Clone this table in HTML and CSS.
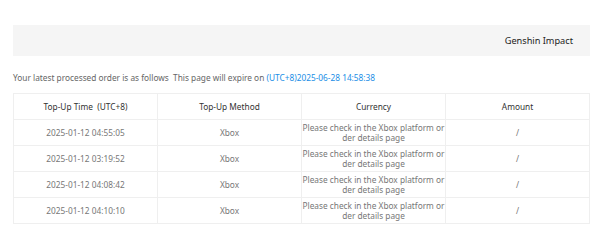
FILE: index.html
```html
<!DOCTYPE html>
<html lang="en">
<head>
<meta charset="utf-8">
<link rel="stylesheet" href="styles.css">
</head>
<body>
<div class="page">
  <div class="topbar"><span class="game">Genshin Impact</span></div>
  <p class="notice">Your latest processed order is as follows&nbsp; This page will expire on <span class="expire">(UTC+8)2025-06-28 14:58:38</span></p>
  <table class="orders">
    <thead>
      <tr><th>Top-Up Time&nbsp; (UTC+8)</th><th>Top-Up Method</th><th>Currency</th><th>Amount</th></tr>
    </thead>
    <tbody>
      <tr><td>2025-01-12 04:55:05</td><td>Xbox</td><td class="cur">Please check in the Xbox platform order details page</td><td>/</td></tr>
      <tr><td>2025-01-12 03:19:52</td><td>Xbox</td><td class="cur">Please check in the Xbox platform order details page</td><td>/</td></tr>
      <tr><td>2025-01-12 04:08:42</td><td>Xbox</td><td class="cur">Please check in the Xbox platform order details page</td><td>/</td></tr>
      <tr><td>2025-01-12 04:10:10</td><td>Xbox</td><td class="cur">Please check in the Xbox platform order details page</td><td>/</td></tr>
    </tbody>
  </table>
</div>
</body>
</html>
```
FILE: styles.css
```css
html, body { margin: 0; padding: 0; background: #fff; }
body { font-family: "Noto Sans", "Open Sans", sans-serif; }
.page { padding: 25px 10px 0 13px; }
.topbar {
  height: 31px;
  background: #f5f5f5;
  display: flex;
  align-items: center;
  justify-content: flex-end;
  padding-right: 17px;
}
.game { font-size: 9.2px; color: #222; }
.notice {
  margin: 16px 0 0 0;
  font-size: 8.3px;
  line-height: 12px;
  color: #666;
}
.expire { color: #1a8ee6; }
.orders {
  margin-top: 9px;
  width: 577px;
  border-collapse: collapse;
  table-layout: fixed;
  font-size: 8.3px;
}
.orders th, .orders td {
  border: 1px solid #efefef;
  height: 25px;
  padding: 0;
  text-align: center;
  vertical-align: middle;
  line-height: 10px;
}
.orders th { color: #333; font-weight: normal; }
.orders td { color: #777; }
.orders td.cur { word-break: break-all; }
```
